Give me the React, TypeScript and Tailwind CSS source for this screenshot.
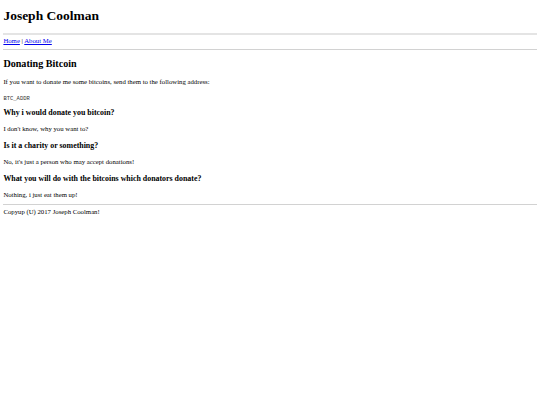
const serif = "font-['Liberation_Serif','Times_New_Roman',serif]"

function Rule({ variant }: { variant?: "top" | "nav" }) {
	if (variant === "top") return <div className="mt-[3.375px] mb-[2.4px] h-[2px] bg-[#e4e4e4]" />
	if (variant === "nav") return <div className="mt-[4.4px] mb-[3.375px] h-px bg-[#d2d2d2]" />
	return <div className="mt-[3.375px] mb-[3.375px] h-px bg-[#d2d2d2]" />
}

function Question({
	title,
	answer,
	first,
	last,
}: {
	title: string
	answer: string
	first?: boolean
	last?: boolean
}) {
	return (
		<>
			<h3
				className={`${first ? "mt-[4.9px]" : "mt-[8.3px]"} mb-[7.9px] text-[7.9px] font-bold leading-[1.149]`}
			>
				{title}
			</h3>
			<p className={last ? "mt-[6.75px] mb-[5.75px]" : "my-[6.75px]"}>{answer}</p>
		</>
	)
}

export default function App() {
	return (
		<div className={`min-h-[405px] bg-white text-black ${serif}`}>
			<div className="mx-[3.375px] flow-root text-[6.75px] leading-[1.149]">
				<h1 className="mt-[8.4px] mb-[9.045px] text-[13.5px] font-bold leading-[1.149]">
					Joseph Coolman
				</h1>
				<Rule variant="top" />
				<div>
					<a href="#" className="text-[#0000ee] underline">
						Home
					</a>{" "}
					|{" "}
					<a href="#" className="text-[#0000ee] underline">
						About Me
					</a>
				</div>
				<Rule variant="nav" />
				<h2 className="mt-[7.4px] mb-[8.4px] text-[10.125px] font-bold leading-[1.149]">
					Donating Bitcoin
				</h2>
				<p className="mt-[6.75px] mb-[8.75px]">
					If you want to donate me some bitcoins, send them to the following address:
				</p>
				<p className="mt-[8.75px] mb-[4px]">
					<code className="font-['Liberation_Mono','Courier_New',monospace] text-[5.5px] text-[#333]">
						BTC_ADDR
					</code>
				</p>
				<Question
					first
					title="Why i would donate you bitcoin?"
					answer="I don't know, why you want to?"
				/>
				<Question
					title="Is it a charity or something?"
					answer="No, it's just a person who may accept donations!"
				/>
				<Question
					last
					title="What you will do with the bitcoins which donators donate?"
					answer="Nothing, i just eat them up!"
				/>
				<Rule />
				<div>Copyup (U) 2017 Joseph Coolman!</div>
			</div>
		</div>
	)
}
